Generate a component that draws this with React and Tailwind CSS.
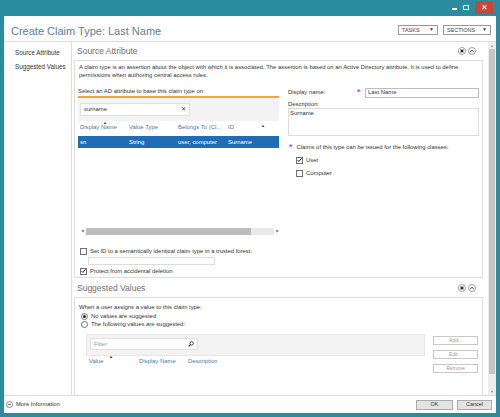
import React from 'react';

const FONT = "font-['Liberation_Sans',Arial,sans-serif]";

function Check({ checked }) {
  return (
    <span className="w-[7px] h-[7px] border border-[#707070] bg-white flex items-center justify-center shrink-0">
      {checked && (
        <svg viewBox="0 0 6 6" className="w-[6px] h-[6px]">
          <path d="M0.8 3.2 L2.3 4.8 L5.4 0.9" stroke="#222" strokeWidth="1.2" fill="none" />
        </svg>
      )}
    </span>
  );
}

function Radio({ on }) {
  return (
    <span className="w-[7px] h-[7px] rounded-full border border-[#707070] bg-white flex items-center justify-center shrink-0">
      {on && <span className="w-[3px] h-[3px] rounded-full bg-[#222]" />}
    </span>
  );
}

function HeaderIcons() {
  return (
    <div className="flex gap-[2px] items-center">
      <svg width="8" height="8" viewBox="0 0 8 8">
        <circle cx="4" cy="4" r="3.5" fill="#fff" stroke="#777" strokeWidth="0.7" />
        <path d="M2.6 2.6L5.4 5.4M5.4 2.6L2.6 5.4" stroke="#222" strokeWidth="1.3" />
      </svg>
      <svg width="8" height="8" viewBox="0 0 8 8">
        <circle cx="4" cy="4" r="3.5" fill="#fff" stroke="#777" strokeWidth="0.7" />
        <path d="M2.5 4.8L4 3.2L5.5 4.8" stroke="#222" strokeWidth="1" fill="none" />
      </svg>
    </div>
  );
}

function SortArrow() {
  return <span className="absolute -top-[3px] left-[2px] text-[4px] leading-none text-[#333]">▲</span>;
}

function Star() {
  return <span className="text-[#e4577f] text-[9px] leading-none font-bold">*</span>;
}

function SectionHeader({ title, h }) {
  return (
    <div className={`${h} flex items-center justify-between pl-[3px] pr-[7px]`}>
      <span className="text-[8.5px] text-[#707070]">{title}</span>
      <HeaderIcons />
    </div>
  );
}

function SideButton({ label }) {
  return (
    <div className="h-[9px] w-[45px] border border-[#c8c8c8] bg-white flex items-center justify-center text-[5px] text-[#9a9a9a]">
      {label}
    </div>
  );
}

export default function App() {
  return (
    <div className={`w-[500px] h-[417px] bg-[#2b8ca0] flex flex-col overflow-hidden ${FONT}`}>
      {/* window chrome */}
      <div className="h-[16px] flex justify-end items-start pr-[7px] pt-[1px] shrink-0">
        <div className="flex items-center h-[13px] gap-[6px] mr-[6px]">
          <span className="w-[5px] h-[2px] bg-white mt-[3px]" />
          <span className="w-[6px] h-[5px] border border-white" />
        </div>
        <div className="w-[18px] h-[13px] bg-[#c9463d] flex items-center justify-center text-white text-[8px] leading-none">✕</div>
      </div>

      <div className="flex-1 mx-[4px] mb-[4px] bg-white flex flex-col min-h-0">
        {/* title area */}
        <div className="h-[26px] shrink-0 border-b border-[#dcdcdc] flex items-center pl-[7px] pr-[5px]">
          <span className="text-[11px] text-[#5e7f92] mt-[6px]">Create Claim Type: Last Name</span>
          <div className="ml-auto flex gap-[5px] mt-[3px]">
            <div className="w-[40px] h-[10px] border border-[#9a9a9a] flex items-center justify-between px-[3px] text-[5.5px] text-[#444]">
              <span>TASKS</span><span className="text-[5px]">▼</span>
            </div>
            <div className="w-[48px] h-[10px] border border-[#9a9a9a] flex items-center justify-between px-[3px] text-[5.5px] text-[#444]">
              <span>SECTIONS</span><span className="text-[5px]">▼</span>
            </div>
          </div>
        </div>

        {/* main */}
        <div className="flex-1 flex min-h-0">
          <div className="w-[68px] shrink-0 border-r border-[#dcdcdc] pl-[11px] pt-[4px] text-[6.3px] text-[#333] leading-[14px]">
            <div>Source Attribute</div>
            <div>Suggested Values</div>
          </div>

          <div className="flex-1 min-w-0 flex flex-col pl-[2px] pr-[5px]">
            <SectionHeader title="Source Attribute" h="h-[18px]" />
            <div className="h-[218px] border border-[#dedede] px-[3px] pt-[2px] text-[5.9px] text-[#333] flex flex-col">
              <p className="leading-[8px] pl-[1px]">
                A claim type is an assertion about the object with which it is associated. The assertion is based on an Active Directory attribute. It is used to define permissions when authoring central access rules.
              </p>
              <div className="flex mt-[8px]">
                {/* left column */}
                <div className="w-[202px] flex flex-col">
                  <div className="h-[9px] leading-[9px]">Select an AD attribute to base this claim type on:</div>
                  <div className="h-[2px] bg-[#f2a833]" />
                  <div className="h-[23px] bg-[#f3f3f3] pt-[5px] pl-[2px]">
                    <div className="w-[110px] h-[13px] bg-white border border-[#e0e0e0] flex items-center justify-between px-[3px]">
                      <span>surname</span>
                      <span className="text-[6px] text-[#333]">✕</span>
                    </div>
                  </div>
                  <div className="h-[12px] flex items-center text-[#4c7aa6] relative">
                    <span className="w-[51px] pl-[2px]">Display <span className="relative">Name<SortArrow /></span></span>
                    <span className="w-[49px]">Value Type</span>
                    <span className="w-[50px]">Belongs To (Cl...</span>
                    <span>ID</span>
                    <span className="absolute right-[14px] top-[2px] text-[4px] text-[#333]">▲</span>
                  </div>
                  <div className="h-[12px] mt-[3px] bg-[#1f6db5] text-white flex items-center">
                    <span className="w-[51px] pl-[2px]">sn</span>
                    <span className="w-[49px]">String</span>
                    <span className="w-[50px]">user, computer</span>
                    <span>Surname</span>
                  </div>
                  <div className="h-[79px]" />
                  <div className="h-[8px] flex items-center gap-[2px] pl-[3px]">
                    <span className="text-[4px] text-[#888]">◀</span>
                    <div className="flex-1 h-[7px] bg-[#e9e9e9] flex">
                      <div className="w-[165px] bg-[#bdbdbd]" />
                    </div>
                    <span className="text-[4px] text-[#888]">▶</span>
                  </div>
                  <div className="h-[8px] mt-[12px] flex items-center gap-[3px] pl-[2px]">
                    <Check />
                    <span className="whitespace-nowrap">Set ID to a semantically identical claim type in a trusted forest:</span>
                  </div>
                  <div className="h-[8px] mt-[2px] ml-[10px] w-[127px] border border-[#dcdcdc]" />
                  <div className="h-[8px] mt-[2px] flex items-center gap-[3px] pl-[2px]">
                    <Check checked />
                    <span>Protect from accidental deletion</span>
                  </div>
                </div>

                {/* right column */}
                <div className="ml-[9px] w-[192px] flex flex-col">
                  <div className="h-[11px] flex items-center">
                    <span className="w-[69px]">Display name:</span>
                    <span className="w-[8px]"><Star /></span>
                    <div className="flex-1 h-[10px] border border-[#bdbdbd] flex items-center pl-[2px]">Last Name</div>
                  </div>
                  <div className="h-[8px] mt-[2px] leading-[8px]">Description:</div>
                  <div className="h-[28px] border border-[#dcdcdc] px-[1px] leading-[8px]">Surname</div>
                  <div className="h-[9px] mt-[7px] flex items-center pl-[1px] gap-[4px]">
                    <Star />
                    <span className="whitespace-nowrap">Claims of this type can be issued for the following classes:</span>
                  </div>
                  <div className="h-[8px] mt-[4px] flex items-center gap-[3px] pl-[8px]">
                    <Check checked /><span>User</span>
                  </div>
                  <div className="h-[8px] mt-[5px] flex items-center gap-[3px] pl-[8px]">
                    <Check /><span>Computer</span>
                  </div>
                </div>
              </div>
            </div>

            <SectionHeader title="Suggested Values" h="h-[18px] mt-[1px]" />
            <div className="flex-1 border border-[#dedede] border-b-0 px-[4px] pt-[5px] text-[5.9px] text-[#333]">
              <div className="h-[8px] leading-[8px]">When a user assigns a value to this claim type:</div>
              <div className="h-[8px] flex items-center gap-[3px] pl-[2px] mt-[1px]">
                <Radio on /><span>No values are suggested</span>
              </div>
              <div className="h-[8px] flex items-center gap-[3px] pl-[2px]">
                <Radio /><span>The following values are suggested:</span>
              </div>
              <div className="flex mt-[6px]">
                <div className="w-[339px] ml-[7px] flex flex-col">
                  <div className="h-[22px] bg-[#f3f3f3] border border-[#e6e6e6] pt-[3px] pl-[3px]">
                    <div className="w-[108px] h-[12px] bg-white border border-[#e0e0e0] flex items-center justify-between px-[3px]">
                      <span className="text-[#9a9a9a]">Filter</span>
                      <svg width="6" height="6" viewBox="0 0 6 6">
                        <circle cx="3.6" cy="2.4" r="1.7" fill="none" stroke="#333" strokeWidth="0.9" />
                        <path d="M2.4 3.6L0.6 5.4" stroke="#333" strokeWidth="1.1" />
                      </svg>
                    </div>
                  </div>
                  <div className="h-[10px] flex items-center text-[#4c7aa6] pl-[3px]">
                    <span className="w-[50px] relative">Value<span className="absolute left-[20px] -top-[3px] text-[4px] text-[#333]">▲</span></span>
                    <span className="w-[49px]">Display Name</span>
                    <span>Description</span>
                  </div>
                </div>
                <div className="ml-[8px] mt-[2px] flex flex-col gap-[5px]">
                  <SideButton label="Add..." />
                  <SideButton label="Edit..." />
                  <SideButton label="Remove" />
                </div>
              </div>
            </div>
          </div>

          {/* vertical scrollbar */}
          <div className="w-[8px] shrink-0 bg-[#ededed] flex flex-col items-center">
            <span className="text-[4px] text-[#999] leading-[7px]">▲</span>
            <div className="w-[6px] flex-1 bg-[#c4c4c4] mb-[14px]" />
            <span className="text-[4px] text-[#999] leading-[7px]">▼</span>
          </div>
        </div>

        {/* footer */}
        <div className="h-[18px] shrink-0 border-t border-[#dcdcdc] flex items-center pl-[2px] pr-[4px]">
          <svg width="7" height="7" viewBox="0 0 8 8">
            <circle cx="4" cy="4" r="3.5" fill="#fff" stroke="#555" strokeWidth="0.7" />
            <path d="M2.5 4.8L4 3.2L5.5 4.8" stroke="#222" strokeWidth="1" fill="none" />
          </svg>
          <span className="ml-[3px] text-[5.8px] text-[#333]">More Information</span>
          <div className="ml-auto flex gap-[4px]">
            <div className="w-[37px] h-[10px] bg-[#e3e3e3] border border-[#acacac] flex items-center justify-center text-[5.5px] text-[#333]">OK</div>
            <div className="w-[35px] h-[10px] bg-[#e3e3e3] border border-[#acacac] flex items-center justify-center text-[5.5px] text-[#333]">Cancel</div>
          </div>
        </div>
      </div>
    </div>
  );
}
